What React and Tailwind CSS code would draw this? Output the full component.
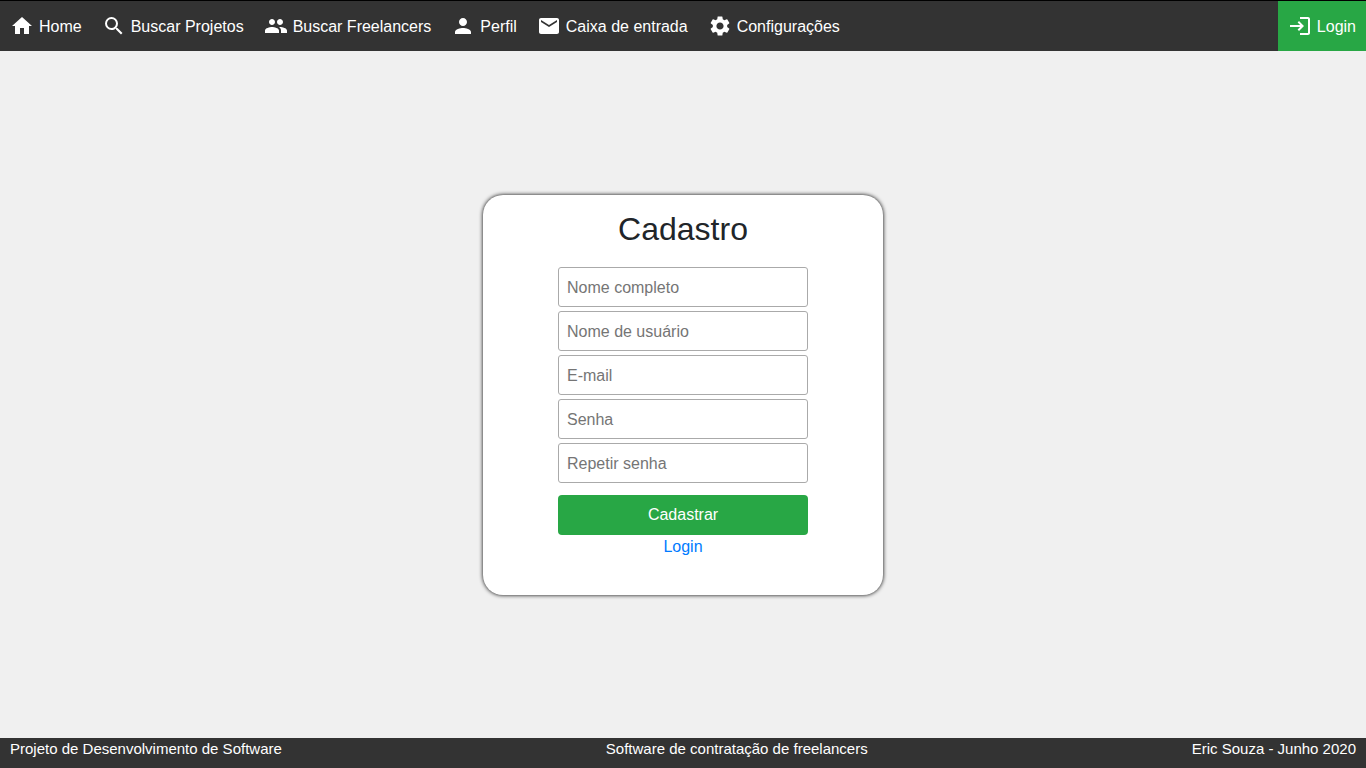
import React from "react";
import {
  MdHome,
  MdSearch,
  MdPeople,
  MdPerson,
  MdEmail,
  MdSettings,
  MdLogin,
} from "react-icons/md";

const navItems = [
  { label: "Home", Icon: MdHome },
  { label: "Buscar Projetos", Icon: MdSearch },
  { label: "Buscar Freelancers", Icon: MdPeople },
  { label: "Perfil", Icon: MdPerson },
  { label: "Caixa de entrada", Icon: MdEmail },
  { label: "Configurações", Icon: MdSettings },
];

const fields = [
  { label: "Nome completo", name: "name", type: "text" },
  { label: "Nome de usuário", name: "username", type: "text" },
  { label: "E-mail", name: "email", type: "email" },
  { label: "Senha", name: "password", type: "password" },
  { label: "Repetir senha", name: "repeat", type: "password" },
];

function NavLink({ label, Icon, className = "" }) {
  return (
    <a
      href="#"
      className={`flex h-[50px] items-center gap-[5px] px-2.5 whitespace-nowrap text-white ${className}`}
    >
      <Icon className="size-6 shrink-0" aria-hidden="true" />
      <span className="pt-0.5">{label}</span>
    </a>
  );
}

function Header() {
  return (
    <header className="flex justify-between border-t border-black bg-[#333]">
      <nav className="flex">
        {navItems.map((item) => (
          <NavLink key={item.label} {...item} />
        ))}
      </nav>
      <NavLink label="Login" Icon={MdLogin} className="bg-[#28a745]" />
    </header>
  );
}

function SignupCard() {
  return (
    <section className="flex min-h-[400px] w-full max-w-[400px] flex-col items-center rounded-[20px] bg-white pt-4 shadow-[0_0_4px_#000]">
      <h1 className="text-[32px] leading-9">Cadastro</h1>
      <form
        className="mt-5 flex w-[250px] flex-col gap-1"
        onSubmit={(event) => event.preventDefault()}
      >
        {fields.map(({ label, name, type }) => (
          <input
            key={name}
            name={name}
            type={type}
            placeholder={label}
            aria-label={label}
            className="h-10 w-full rounded-[3px] border border-[#aaa] bg-white px-2 pt-0.5 placeholder:text-[#757575]"
          />
        ))}
        <button
          type="submit"
          className="mt-2 h-10 rounded-sm bg-[#28a745] text-white"
        >
          Cadastrar
        </button>
      </form>
      <a href="#" className="text-[#007bff]">
        Login
      </a>
    </section>
  );
}

export default function App() {
  return (
    <div className="flex min-h-screen flex-col bg-[#f0f0f0] font-['Liberation_Sans',Arial,sans-serif] text-base text-[#212529]">
      <Header />
      <main className="flex grow items-center justify-center">
        <SignupCard />
      </main>
      <footer className="flex h-[30px] justify-between bg-[#333] px-2.5 text-[15px] leading-[22px] text-white">
        <span>Projeto de Desenvolvimento de Software</span>
        <span>Software de contratação de freelancers</span>
        <span>Eric Souza - Junho 2020</span>
      </footer>
    </div>
  );
}
